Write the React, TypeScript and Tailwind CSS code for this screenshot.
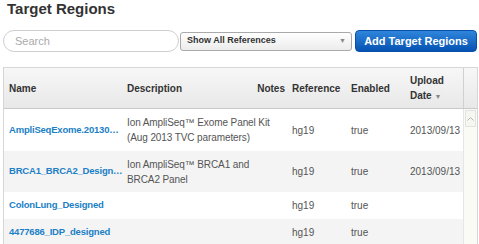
import React from 'react';

interface TargetRegion {
    name: string;
    description: string[];
    reference: string;
    enabled: string;
    uploadDate: string;
    height: string;
    shaded: boolean;
}

const regions: TargetRegion[] = [
    {
        name: 'AmpliSeqExome.20130…',
        description: ['Ion AmpliSeq™ Exome Panel Kit', '(Aug 2013 TVC parameters)'],
        reference: 'hg19',
        enabled: 'true',
        uploadDate: '2013/09/13',
        height: 'h-[42px]',
        shaded: false,
    },
    {
        name: 'BRCA1_BRCA2_Design…',
        description: ['Ion AmpliSeq™ BRCA1 and', 'BRCA2 Panel'],
        reference: 'hg19',
        enabled: 'true',
        uploadDate: '2013/09/13',
        height: 'h-[41px]',
        shaded: true,
    },
    {
        name: 'ColonLung_Designed',
        description: [],
        reference: 'hg19',
        enabled: 'true',
        uploadDate: '',
        height: 'h-[27px]',
        shaded: false,
    },
    {
        name: '4477686_IDP_designed',
        description: [],
        reference: 'hg19',
        enabled: 'true',
        uploadDate: '',
        height: 'h-[27px]',
        shaded: true,
    },
];

const cols = 'grid grid-cols-[118px_135px_30px_59px_59px_58px]';

export default function App() {
    return (
        <div className="w-[479px] h-[244px] overflow-hidden bg-white font-['Liberation_Sans',Arial,sans-serif]">
            <h1 className="pl-[7px] text-[15px] leading-[18px] font-bold text-[#333]">Target Regions</h1>

            <div className="flex items-center h-[22px] mt-[12px] pl-[3px]">
                <div className="w-[176px] h-[22px] rounded-full border border-[#cfcfcf] bg-white flex items-center pl-[11px] text-[11px] text-[#aaa]">
                    Search
                </div>
                <div className="ml-[1px] w-[172px] h-[19px] rounded-[3px] border border-[#a9a9a9] bg-gradient-to-b from-white to-[#ececec] flex items-center justify-between pl-[6px] pr-[5px]">
                    <span className="text-[9px] font-bold text-[#333]">Show All References</span>
                    <span className="text-[7px] text-[#888]">▼</span>
                </div>
                <button className="ml-[3px] w-[122px] h-[22px] rounded-[4px] bg-gradient-to-b from-[#2f86dc] to-[#0552b2] border border-[#0a4fa8] text-white text-[11px] font-bold">
                    Add Target Regions
                </button>
            </div>

            <div className="mt-[15px] ml-[3px] w-[475px] border-l border-t border-r border-[#d6d6d6]">
                <div className="flex h-[41px] bg-gradient-to-b from-[#f7f7f7] to-[#e8e8e8] border-b border-[#c9c9c9] text-[10px] font-bold text-[#333]">
                    <div className={cols + ' items-center'}>
                        <div className="pl-[5px]">Name</div>
                        <div className="pl-[5px]">Description</div>
                        <div className="text-right pr-[2px]">Notes</div>
                        <div className="pl-[5px]">Reference</div>
                        <div className="pl-[5px]">Enabled</div>
                        <div className="pl-[5px] leading-[15px]">
                            Upload
                            <br />
                            Date <span className="text-[7px] text-[#888]">▼</span>
                        </div>
                    </div>
                    <div className="flex-1 border-l border-[#d0d0d0]" />
                </div>

                <div className="flex">
                    <div className="w-[459px]">
                        {regions.map(r => (
                            <div key={r.name} className={`${cols} items-center ${r.height} ${r.shaded ? 'bg-[#f4f4f4]' : 'bg-white'} text-[10px] text-[#555]`}>
                                <div className="pl-[5px] text-[9.5px] tracking-[-0.2px] font-bold text-[#1b80c6] whitespace-nowrap">{r.name}</div>
                                <div className="pl-[5px] leading-[15px] whitespace-nowrap tracking-[-0.1px]">
                                    {r.description.map(line => (
                                        <div key={line}>{line}</div>
                                    ))}
                                </div>
                                <div />
                                <div className="pl-[5px]">{r.reference}</div>
                                <div className="pl-[5px]">{r.enabled}</div>
                                <div className="pl-[5px]">{r.uploadDate}</div>
                            </div>
                        ))}
                    </div>
                    <div className="flex-1 bg-[#fbfbf6] border-l border-[#e6e6e6] flex flex-col">
                        <div className="h-[17px] mx-[1px] mt-[1px] border border-[#e2e2e2] bg-[#f7f7f2] flex items-center justify-center">
                            <svg width="7" height="4" viewBox="0 0 7 4">
                                <path d="M0.5 3.5 L3.5 0.5 L6.5 3.5" fill="none" stroke="#b5b5b5" strokeWidth="1" />
                            </svg>
                        </div>
                    </div>
                </div>
            </div>
        </div>
    );
}
